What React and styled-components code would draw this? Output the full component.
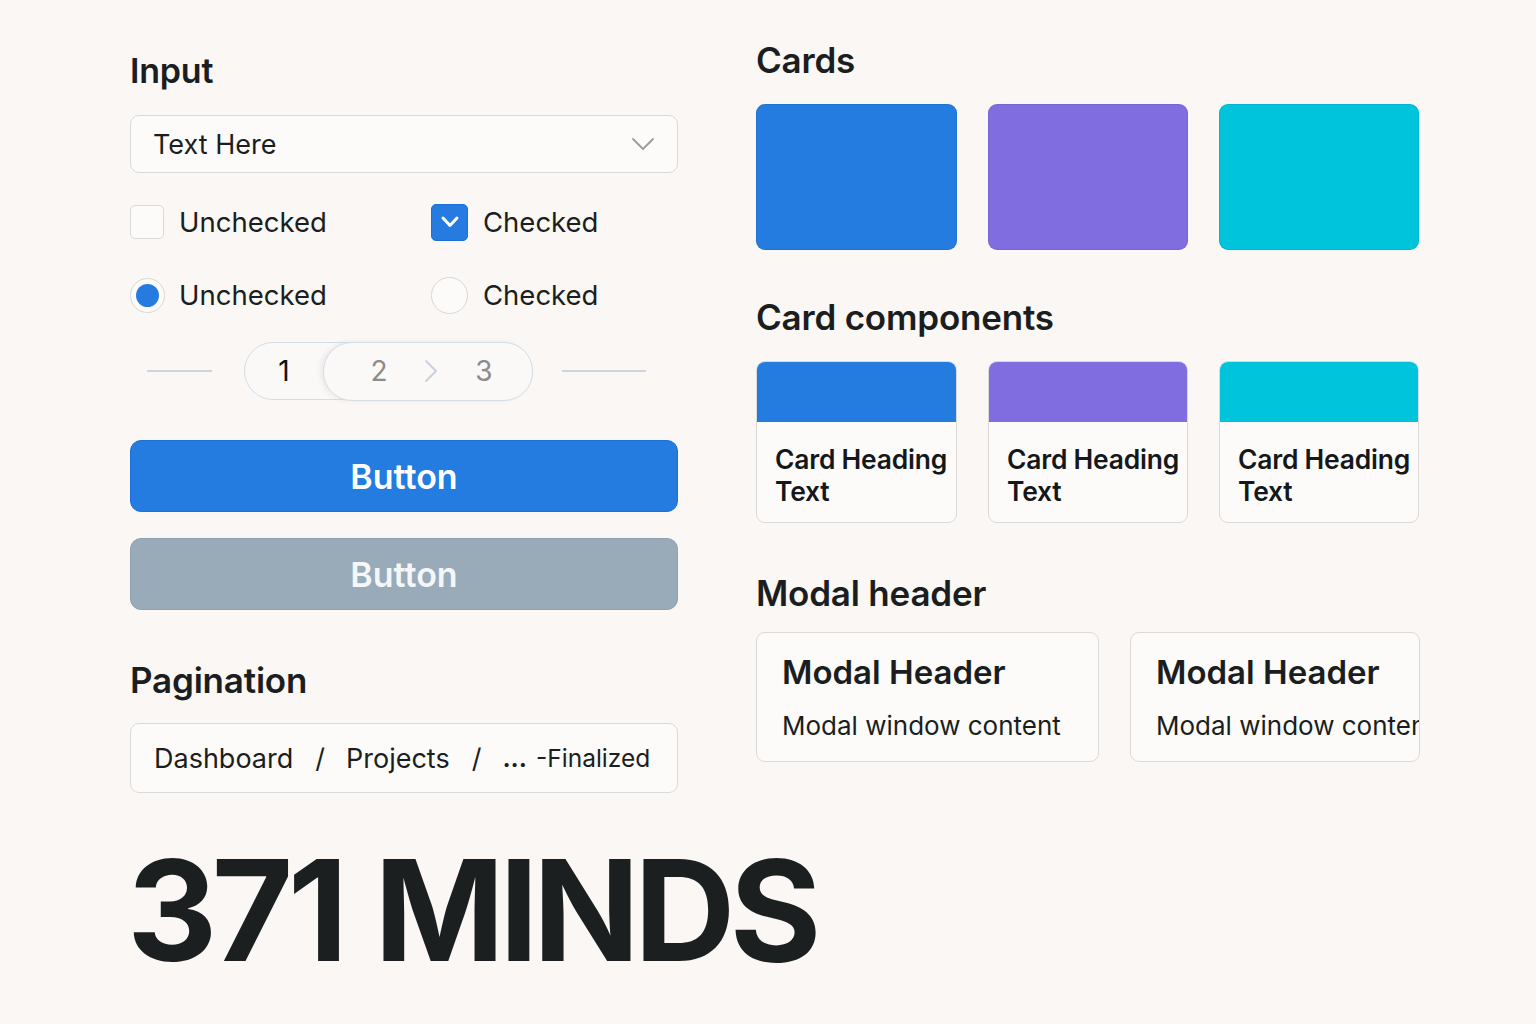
import React from 'react'
import styled, { createGlobalStyle } from 'styled-components'

const GlobalStyle = createGlobalStyle`
  html, body {
    margin: 0;
    padding: 0;
    background: #faf7f4;
  }
  body {
    font-family: Inter, "Noto Sans", "Liberation Sans", sans-serif;
    color: #1b1e20;
  }
`

const Page = styled.div`
  width: 1536px;
  height: 1024px;
  box-sizing: border-box;
  padding: 40px 0 0 130px;
  overflow: hidden;
`

const Columns = styled.div`
  display: grid;
  grid-template-columns: 548px 664px;
  column-gap: 78px;
  align-items: start;
`

const Column = styled.div`
  display: flex;
  flex-direction: column;
`

const Heading = styled.h2`
  margin: ${p => p.$top || 0}px 0 0 0;
  font-size: ${p => p.$size || 35}px;
  line-height: 40px;
  font-weight: 600;
  letter-spacing: -0.2px;
  color: #1b1e20;
`

const Select = styled.div`
  margin-top: 24px;
  height: 58px;
  box-sizing: border-box;
  border: 1px solid #dcdad8;
  border-radius: 9px;
  background: #fcfbfa;
  display: flex;
  align-items: center;
  justify-content: space-between;
  padding: 0 22px 0 22px;
  font-size: 27px;
  color: #1b1e20;
`

const ControlGrid = styled.div`
  margin-top: ${p => p.$top}px;
  display: grid;
  grid-template-columns: 301px 1fr;
  height: 40px;
  align-items: center;
`

const Control = styled.label`
  display: flex;
  align-items: center;
  gap: 15px;
  font-size: 27.5px;
  color: #1b1e20;
`

const Box = styled.span`
  width: ${p => (p.$checked ? 37 : 34)}px;
  height: ${p => (p.$checked ? 37 : 34)}px;
  box-sizing: border-box;
  border-radius: 5px;
  border: 1px solid ${p => (p.$checked ? '#1c6fd6' : '#dcdad8')};
  background: ${p => (p.$checked ? '#257be0' : '#fcfbfa')};
  display: flex;
  align-items: center;
  justify-content: center;
`

const Radio = styled.span`
  width: ${p => (p.$on ? 35 : 37)}px;
  height: ${p => (p.$on ? 35 : 37)}px;
  margin-right: ${p => (p.$on ? -1 : 0)}px;
  box-sizing: border-box;
  border-radius: 50%;
  border: 1.5px solid #d8d8d8;
  background: #fcfbfa;
  display: flex;
  align-items: center;
  justify-content: center;
  &::after {
    content: '';
    display: ${p => (p.$on ? 'block' : 'none')};
    width: 23px;
    height: 23px;
    border-radius: 50%;
    background: #257be0;
  }
`

const StepRow = styled.div`
  margin-top: 27px;
  display: flex;
  align-items: center;
  height: 58px;
`

const Line = styled.span`
  height: 1.5px;
  background: #cdd6e0;
  width: ${p => p.$w}px;
  margin-left: ${p => p.$ml}px;
`

const StepPill = styled.div`
  margin-left: 32px;
  width: 288px;
  height: 58px;
  box-sizing: border-box;
  border: 1.5px solid #d6dde6;
  border-radius: 29px;
  display: flex;
  align-items: stretch;
  background: #fbf9f7;
`

const StepFirst = styled.span`
  width: 78px;
  display: flex;
  align-items: center;
  justify-content: center;
  font-size: 28px;
  color: #111;
`

const StepRest = styled.span`
  flex: 1;
  margin: -1.5px -1.5px -1.5px 0;
  border: 1.5px solid #d6dde6;
  border-radius: 29px;
  background: #fbf9f7;
  box-shadow: -3px 0 4px rgba(120, 140, 160, 0.12);
  display: flex;
  align-items: center;
  padding-left: 46px;
  font-size: 28px;
  color: #8c8c8c;
`

const StepNum = styled.span`
  width: 18px;
  text-align: center;
`

const Chev = styled.span`
  display: flex;
  margin: 0 37px 0 36px;
`

const Button = styled.button`
  margin-top: ${p => p.$top}px;
  height: 72px;
  width: 100%;
  border-radius: 11px;
  border: 1px solid ${p => (p.$disabled ? '#8fa0ae' : '#1c6fd8')};
  background: ${p => (p.$disabled ? '#99aab8' : '#247be0')};
  color: ${p => (p.$disabled ? '#f4f6f8' : '#ffffff')};
  font-family: Inter, "Noto Sans", sans-serif;
  font-size: 34px;
  font-weight: 600;
  cursor: pointer;
`

const Crumbs = styled.div`
  margin-top: 23px;
  height: 70px;
  box-sizing: border-box;
  border: 1px solid #dcdad8;
  border-radius: 9px;
  background: #fcfbfa;
  display: flex;
  align-items: center;
  padding-left: 23px;
  font-size: 27px;
  color: #1b1e20;
`

const Sep = styled.span`
  margin: 0 21px 0 22px;
`

const Tail = styled.span`
  font-size: 24.5px;
`

const Dots = styled.span`
  font-weight: 700;
  margin-right: 9px;
`

const CardRow = styled.div`
  margin-top: ${p => p.$top}px;
  display: grid;
  grid-template-columns: 201px 200px 200px;
  column-gap: 31px;
`

const ColorCard = styled.div`
  height: 146px;
  border-radius: 9px;
  background: ${p => p.$color};
  box-shadow: inset 0 0 0 1px rgba(0, 0, 0, 0.06);
`

const CompCard = styled.div`
  height: 162px;
  box-sizing: border-box;
  border: 1px solid #dcdad8;
  border-radius: 9px;
  background: #fcfbfa;
  overflow: hidden;
  display: flex;
  flex-direction: column;
`

const CompTop = styled.div`
  height: 60px;
  background: ${p => p.$color};
  flex-shrink: 0;
`

const CompBody = styled.div`
  padding: 21px 0 0 18px;
  font-size: 26.4px;
  line-height: 32px;
  font-weight: 600;
  letter-spacing: -0.2px;
  color: #15181a;
`

const ModalRow = styled.div`
  margin-top: 19px;
  display: grid;
  grid-template-columns: 343px 290px;
  column-gap: 31px;
`

const Modal = styled.div`
  height: 130px;
  box-sizing: border-box;
  border: 1px solid #dcdad8;
  border-radius: 9px;
  background: #fcfbfa;
  padding: 19px 0 0 25px;
  overflow: hidden;
  white-space: nowrap;
`

const ModalTitle = styled.div`
  font-size: 33px;
  line-height: 40px;
  font-weight: 600;
  color: #1b1e20;
`

const ModalText = styled.div`
  margin-top: 19px;
  font-size: 26px;
  line-height: 30px;
  color: #1b1e20;
`

const Brand = styled.div`
  margin: 42px 0 0 -3px;
  font-size: 140px;
  line-height: 150px;
  font-weight: 700;
  letter-spacing: -5.5px;
  word-spacing: 4px;
  color: #1b1f20;
`

const SelectChevron = () => (
  <svg width='24' height='14' viewBox='0 0 24 14'>
    <polyline points='2,2 12,12 22,2' fill='none' stroke='#9c9c9c' strokeWidth='1.8' strokeLinecap='round' strokeLinejoin='round' />
  </svg>
)

const CheckMark = () => (
  <svg width='20' height='14' viewBox='0 0 20 14'>
    <polyline points='3,3 10,10.5 17,3' fill='none' stroke='#fff' strokeWidth='3' strokeLinecap='round' strokeLinejoin='round' />
  </svg>
)

const StepChevron = () => (
  <svg width='14' height='24' viewBox='0 0 14 24'>
    <polyline points='2,2 12,12 2,22' fill='none' stroke='#c9d1da' strokeWidth='1.8' strokeLinecap='round' strokeLinejoin='round' />
  </svg>
)

const colors = ['#247be0', '#806ee0', '#00c4db']

function App () {
  return (
    <>
      <GlobalStyle />
      <Page>
        <Columns>
          <Column>
            <Heading $size={34} $top={11}>Input</Heading>
            <Select>
              <span>Text Here</span>
              <SelectChevron />
            </Select>
            <ControlGrid $top={29}>
              <Control><Box />Unchecked</Control>
              <Control><Box $checked><CheckMark /></Box>Checked</Control>
            </ControlGrid>
            <ControlGrid $top={33}>
              <Control><Radio $on />Unchecked</Control>
              <Control><Radio />Checked</Control>
            </ControlGrid>
            <StepRow>
              <Line $w={65} $ml={17} />
              <StepPill>
                <StepFirst>1</StepFirst>
                <StepRest>
                  <StepNum>2</StepNum>
                  <Chev><StepChevron /></Chev>
                  <StepNum>3</StepNum>
                </StepRest>
              </StepPill>
              <Line $w={84} $ml={30} />
            </StepRow>
            <Button $top={40}>Button</Button>
            <Button $top={26} $disabled>Button</Button>
            <Heading $top={50}>Pagination</Heading>
            <Crumbs>
              Dashboard<Sep>/</Sep>Projects<Sep>/</Sep>
              <Tail><Dots>...</Dots>-Finalized</Tail>
            </Crumbs>
          </Column>
          <Column>
            <Heading>Cards</Heading>
            <CardRow $top={24}>
              {colors.map(c => <ColorCard key={c} $color={c} />)}
            </CardRow>
            <Heading $top={47}>Card components</Heading>
            <CardRow $top={24}>
              {colors.map(c => (
                <CompCard key={c}>
                  <CompTop $color={c} />
                  <CompBody>Card Heading<br />Text</CompBody>
                </CompCard>
              ))}
            </CardRow>
            <Heading $top={50}>Modal header</Heading>
            <ModalRow>
              <Modal>
                <ModalTitle>Modal Header</ModalTitle>
                <ModalText>Modal window content</ModalText>
              </Modal>
              <Modal>
                <ModalTitle>Modal Header</ModalTitle>
                <ModalText>Modal window content</ModalText>
              </Modal>
            </ModalRow>
          </Column>
        </Columns>
        <Brand>371 MINDS</Brand>
      </Page>
    </>
  )
}

export default App
